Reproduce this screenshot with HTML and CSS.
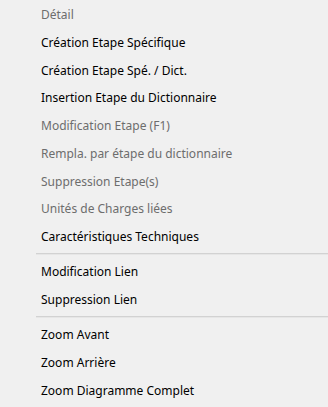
FILE: index.html
```html
<!DOCTYPE html>
<html lang="fr">
<head>
<meta charset="utf-8">
<link rel="stylesheet" href="styles.css">
</head>
<body>
<div class="menu">
  <div class="item disabled">Détail</div>
  <div class="item">Création Etape Spécifique</div>
  <div class="item">Création Etape Spé. / Dict.</div>
  <div class="item">Insertion Etape du Dictionnaire</div>
  <div class="item disabled">Modification Etape (F1)</div>
  <div class="item disabled">Rempla. par étape du dictionnaire</div>
  <div class="item disabled">Suppression Etape(s)</div>
  <div class="item disabled">Unités de Charges liées</div>
  <div class="item">Caractéristiques Techniques</div>
  <div class="sep"></div>
  <div class="item">Modification Lien</div>
  <div class="item">Suppression Lien</div>
  <div class="sep"></div>
  <div class="item">Zoom Avant</div>
  <div class="item">Zoom Arrière</div>
  <div class="item">Zoom Diagramme Complet</div>
</div>
</body>
</html>
```
FILE: styles.css
```css
html, body {
  margin: 0;
  padding: 0;
  background: #f0f0f0;
}
.menu {
  width: 328px;
  height: 407px;
  box-sizing: border-box;
  padding-top: 1px;
  background: #f0f0f0;
  font-family: "Noto Sans", "Open Sans", sans-serif;
  font-size: 12px;
  color: #000;
  display: flex;
  flex-direction: column;
}
.item {
  height: 27.75px;
  line-height: 27.75px;
  padding-left: 41px;
  white-space: nowrap;
}
.item.disabled {
  color: #6d6d6d;
}
.sep {
  height: 7.5px;
  margin-left: 36px;
  box-sizing: border-box;
  padding-top: 2.5px;
}
.sep::before {
  content: "";
  display: block;
  height: 1px;
  background: #d2d2d2;
  border-bottom: 1px solid #e6e6e6;
}
```
